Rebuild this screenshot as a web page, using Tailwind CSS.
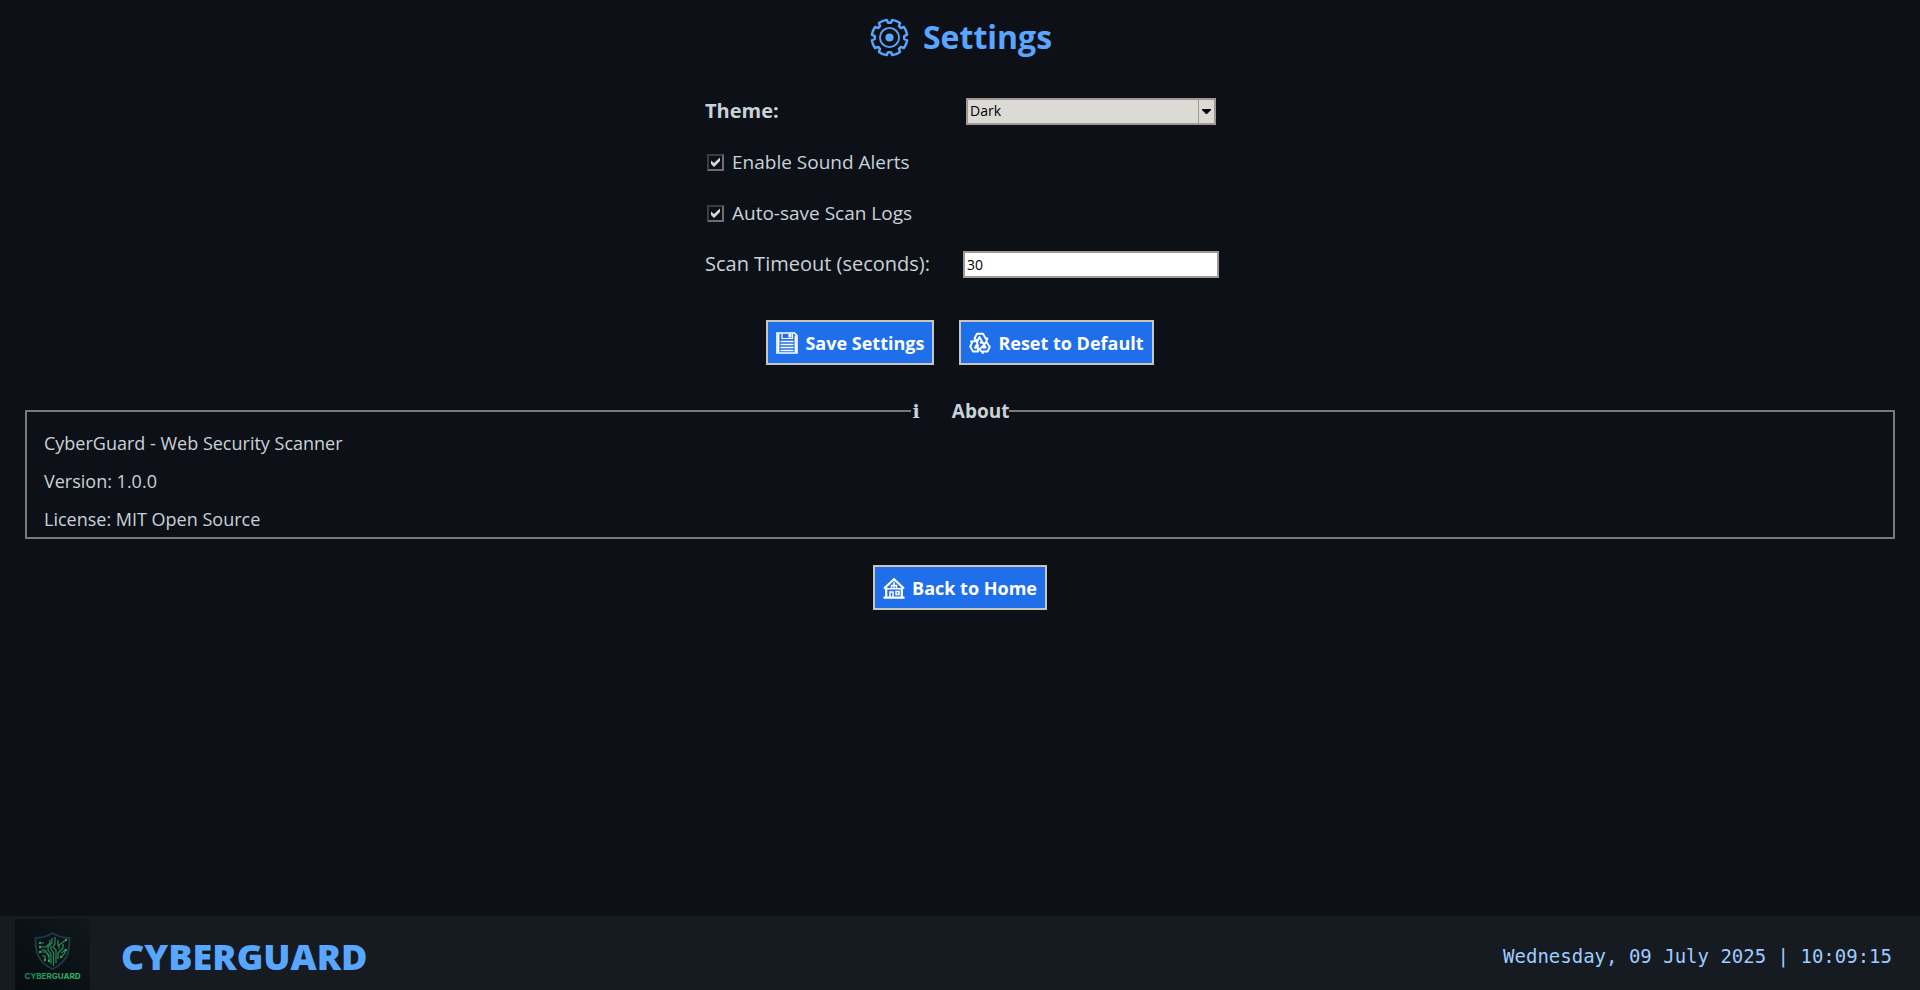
<!DOCTYPE html>
<html lang="en">
<head>
<meta charset="utf-8">
<meta name="viewport" content="width=device-width, initial-scale=1">
<title>CyberGuard - Settings</title>
<script src="https://cdn.jsdelivr.net/npm/@tailwindcss/browser@4"></script>
</head>
<body class="flex min-h-screen flex-col bg-[#0d1117] font-['Open_Sans','Noto_Sans',sans-serif] text-[#c9d1d9]">
<main class="flex flex-1 flex-col items-center px-[25px] pt-[13px]">
  <h1 class="flex h-12 items-center gap-[14px] pl-0.5 text-[32px] font-bold text-[#58a6ff]">
    <svg class="size-[39px]" viewBox="0 0 40 40" fill="none" stroke="currentColor" stroke-width="2.5" stroke-linejoin="round" aria-hidden="true">
      <path d="M38.100 22.900A18.300 18.300 0 0 1 34.800 30.800L31.700 29.700 29.700 31.700 30.800 34.800A18.300 18.300 0 0 1 22.900 38.100L21.500 35.100H18.500L17.100 38.100A18.300 18.300 0 0 1 9.200 34.800L10.300 31.700 8.300 29.700 5.200 30.800A18.300 18.300 0 0 1 1.900 22.900L4.900 21.500V18.500L1.900 17.100A18.300 18.300 0 0 1 5.200 9.200L8.300 10.300 10.300 8.300 9.200 5.200A18.300 18.300 0 0 1 17.100 1.900L18.500 4.900H21.500L22.900 1.900A18.300 18.300 0 0 1 30.800 5.200L29.700 8.300 31.700 10.300 34.800 9.200A18.300 18.300 0 0 1 38.100 17.100L35.100 18.500V21.500Z"/>
      <circle cx="20" cy="20" r="9.8" stroke-width="1.9"/>
      <circle cx="20" cy="20" r="4.2" fill="currentColor" stroke="none"/>
    </svg>
    Settings
  </h1>

  <form class="flex flex-col items-center">
    <div class="mt-9 grid grid-cols-[258px_256px] items-center pl-1">
      <label for="theme" class="h-7 text-xl leading-7 font-bold">Theme:</label>
      <div class="relative mx-[3px]">
        <select id="theme" class="block h-[27px] w-full appearance-none rounded-none border-2 border-[#9e9a91] bg-[#dcdad5] pl-0.5 text-sm text-black">
          <option>Dark</option>
          <option>Light</option>
        </select>
        <span class="pointer-events-none absolute inset-y-0.5 right-0.5 flex w-4 items-center justify-center border-l border-[#9e9a91]">
          <svg class="h-[5px] w-[9px]" viewBox="0 0 9 5" aria-hidden="true"><path d="M0 0H9V1L5 5H4L0 1Z" fill="#000"/></svg>
        </span>
      </div>
      <div class="col-span-2 mt-[23px] flex h-7 items-center gap-2 pl-0.5">
        <span class="grid size-[17px] place-items-center">
          <input id="sound" type="checkbox" checked class="peer col-start-1 row-start-1 size-[17px] appearance-none border-2 border-t-[#3a3d42] border-r-[#6c6e71] border-b-[#6c6e71] border-l-[#3a3d42] bg-[#0d1117]">
          <svg class="pointer-events-none invisible col-start-1 row-start-1 size-[13px] peer-checked:visible" viewBox="0 0 13 13" aria-hidden="true"><path d="M2 4.500L5 7L11 1.500V5L5 11L2 8Z" fill="#d5dbe1"/></svg>
        </span>
        <label for="sound" class="text-[19px] leading-7">Enable Sound Alerts</label>
      </div>
      <div class="col-span-2 mt-[23px] flex h-7 items-center gap-2 pl-0.5">
        <span class="grid size-[17px] place-items-center">
          <input id="autosave" type="checkbox" checked class="peer col-start-1 row-start-1 size-[17px] appearance-none border-2 border-t-[#3a3d42] border-r-[#6c6e71] border-b-[#6c6e71] border-l-[#3a3d42] bg-[#0d1117]">
          <svg class="pointer-events-none invisible col-start-1 row-start-1 size-[13px] peer-checked:visible" viewBox="0 0 13 13" aria-hidden="true"><path d="M2 4.500L5 7L11 1.500V5L5 11L2 8Z" fill="#d5dbe1"/></svg>
        </span>
        <label for="autosave" class="text-[19px] leading-7">Auto-save Scan Logs</label>
      </div>
      <label for="timeout" class="mt-[23px] text-xl leading-7">Scan Timeout (seconds):</label>
      <input id="timeout" type="text" value="30" class="mt-[23px] h-[27px] w-full border-2 border-[#9e9a91] bg-white pl-0.5 text-sm text-black">
    </div>

    <div class="mt-[42px] flex gap-[25px]">
      <button type="button" class="flex h-[45px] items-center gap-[7px] border-2 border-[#c9c5bd] bg-[#1f6feb] px-2 text-lg font-bold text-white">
        <svg class="size-[22px]" viewBox="0 0 22 22" fill="none" stroke="#fff" aria-hidden="true">
          <path d="M1 1H18.500L21 3.500V21H1Z" stroke-width="1.6"/>
          <path d="M2.500 2V20M19.500 3.500V20" stroke-width="1.8"/>
          <path d="M6 1.500V6.500H16.500V1.500" stroke-width="1.2"/>
          <path d="M12.500 2H15.500V5.500H12.500Z" fill="#fff" stroke="none"/>
          <path d="M4.500 9.500H17.500M4.500 12.500H17.500M4.500 15.500H17.500M4.500 18.500H17.500" stroke-width="1.3"/>
        </svg>
        Save Settings
      </button>
      <button type="reset" class="flex h-[45px] items-center gap-[7px] border-2 border-[#c9c5bd] bg-[#1f6feb] px-2 text-lg font-bold text-white">
        <svg class="size-[22px]" viewBox="0 0 22 22" fill="none" stroke="#fff" stroke-width="1.9" stroke-linejoin="round" aria-hidden="true">
          <path d="M5.500 6.500 8 1.800H14L17 7 18.500 6.500 16.500 11.500 11.500 10.500 13 9.500 10.500 5 8.500 9Z"/>
          <path d="M17.500 10 20.800 15 18.500 19.500H14V21L10.500 17.300 14 13.800V15.500H16.500L14.500 12"/>
          <path d="M9 19.500H4L1.200 14.500 3 11 2 9.500 7.500 9 9 14 7.300 13.200 6 15.700H9Z"/>
        </svg>
        Reset to Default
      </button>
    </div>
  </form>

  <fieldset class="mt-8 w-full border-2 border-[#77797c] px-[17px] pb-1">
    <legend class="mx-auto flex h-7 items-center gap-8 text-[19px] font-bold"><span class="pl-0.5 font-['DejaVu_Serif',serif]">i</span><span>About</span></legend>
    <div class="flex flex-col gap-2.5 pt-1 text-lg leading-7">
      <p>CyberGuard - Web Security Scanner</p>
      <p>Version: 1.0.0</p>
      <p>License: MIT Open Source</p>
    </div>
  </fieldset>

  <button type="button" class="mt-[26px] flex h-[45px] items-center gap-[7px] border-2 border-[#c9c5bd] bg-[#1f6feb] px-2 text-lg font-bold text-white">
    <svg class="size-[22px]" viewBox="0 0 22 22" fill="none" stroke="#fff" stroke-width="2.2" aria-hidden="true">
      <path d="M1 11.500 11 2.200 21 11.500M3.200 10.500V20.500M18.800 10.500V20.500M0.500 20.600H21.500"/>
      <path d="M7 20V15H10V20M13 14.500H16V17.500H13Z" stroke-width="1.5"/>
      <path d="M4 11.800H18M8.500 11.500V8.500H13.500V11.500M11 5V12" stroke-width="1.5"/>
    </svg>
    Back to Home
  </button>
</main>

<footer class="flex h-[74px] items-center justify-between bg-[#161b22] pr-7 pl-[15px]">
  <div class="flex items-center gap-[31px]">
    <svg class="mt-[3px] h-[71px] w-[75px]" viewBox="0 0 75 71" role="img" aria-label="CyberGuard logo">
      <defs>
        <linearGradient id="bg" x1="1" y1="0" x2="0" y2="1"><stop offset="0" stop-color="#10181d"/><stop offset="1" stop-color="#060c0f"/></linearGradient>
        <linearGradient id="word" x1="0" y1="0" x2="1" y2="0"><stop offset="0" stop-color="#1d8a60"/><stop offset="1" stop-color="#35bb66"/></linearGradient>
      </defs>
      <rect width="75" height="71" fill="url(#bg)"/>
      <path d="M37.500 14C42 17 48 19 54.500 19C55 33 52 43 37.500 50C23 43 20 33 20.500 19C27 19 33 17 37.500 14Z" fill="#0a1419" stroke="#22394a" stroke-width="1.800"/>
      <g fill="none" stroke="#2b8a58" stroke-width="1.200">
        <path d="M25 24H29M25 28H31L35 24V21M25 33H31L34 36V40M27 37H30V41M34 42V38L30 31H26M36 45V35L33 31V28L37 24V19M38.500 47V34L36 30V27M41 44V31L38 28L40 25V18M43 40V34L48 29V25M44 30V26L51 21M43 27V21M46 38L50 34V30M46 34L51 31"/>
      </g>
      <g fill="#359f62"><circle cx="25" cy="24" r="1.200"/><circle cx="25" cy="28" r="1.200"/><circle cx="25" cy="33" r="1.200"/><circle cx="30" cy="41" r="1.200"/><circle cx="34" cy="42" r="1.200"/><circle cx="46" cy="38" r="1.200"/><circle cx="51" cy="31" r="1.200"/><circle cx="51" cy="21" r="1.200"/></g>
      <text x="37.500" y="60" text-anchor="middle" class="font-['Inter',sans-serif] text-[8px] font-bold" fill="url(#word)">CYBERGUARD</text>
    </svg>
    <span class="pt-2 text-[36px] leading-none font-black text-[#58a6ff]">CYBERGUARD</span>
  </div>
  <time class="pt-1.5 font-['DejaVu_Sans_Mono',monospace] text-[19px] text-[#9ecbff]" datetime="2025-07-09T10:09:15">Wednesday, 09 July 2025 | 10:09:15</time>
</footer>
</body>
</html>
